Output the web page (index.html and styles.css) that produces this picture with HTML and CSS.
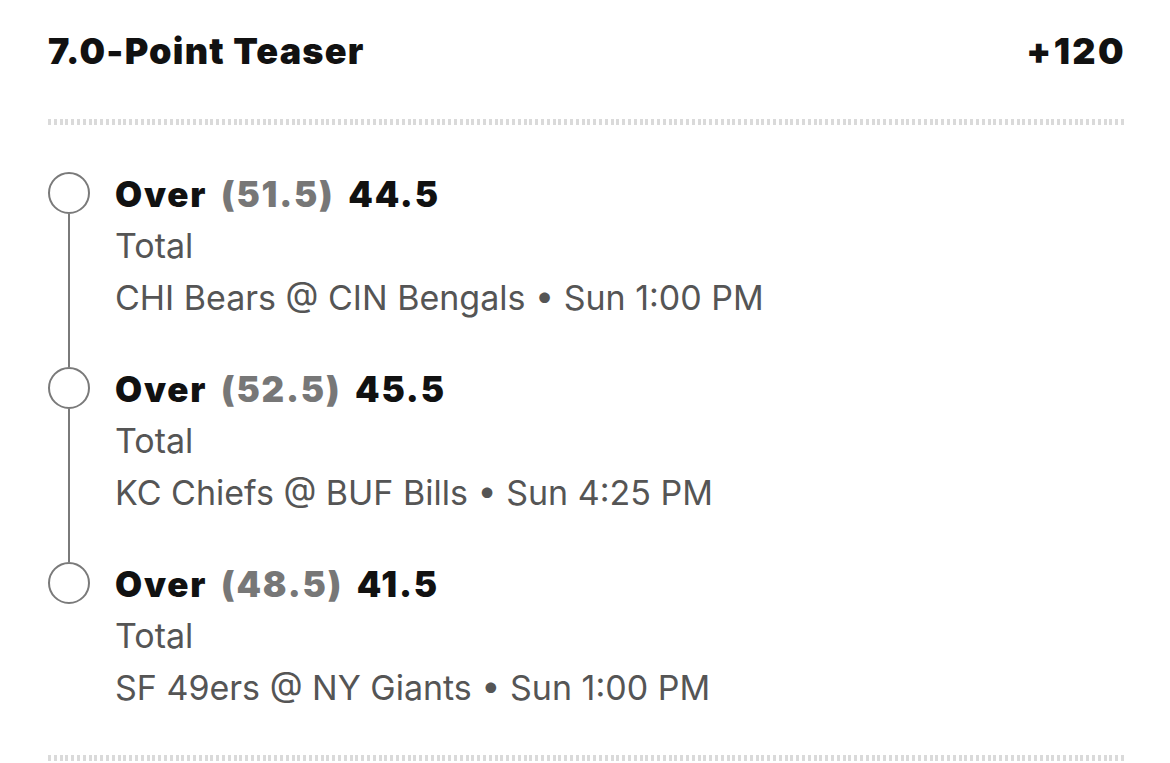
FILE: index.html
```html
<!DOCTYPE html>
<html>
<head>
<meta charset="utf-8">
<link rel="stylesheet" href="styles.css">
</head>
<body>
<div class="card">
  <div class="header">
    <div class="title">7.0-Point Teaser</div>
    <div class="odds">+120</div>
  </div>
  <div class="divider"></div>
  <div class="legs">
    <div class="leg">
      <div class="marker"><div class="dot"></div><div class="line"></div></div>
      <div class="info">
        <div class="pick">Over <span class="orig">(51.5)</span> 44.5</div>
        <div class="market">Total</div>
        <div class="game">CHI Bears @ CIN Bengals • Sun 1:00 PM</div>
      </div>
    </div>
    <div class="leg">
      <div class="marker"><div class="dot"></div><div class="line"></div></div>
      <div class="info">
        <div class="pick">Over <span class="orig">(52.5)</span> 45.5</div>
        <div class="market">Total</div>
        <div class="game">KC Chiefs @ BUF Bills • Sun 4:25 PM</div>
      </div>
    </div>
    <div class="leg last">
      <div class="marker"><div class="dot"></div></div>
      <div class="info">
        <div class="pick">Over <span class="orig">(48.5)</span> 41.5</div>
        <div class="market">Total</div>
        <div class="game">SF 49ers @ NY Giants • Sun 1:00 PM</div>
      </div>
    </div>
  </div>
  <div class="divider"></div>
</div>
</body>
</html>
```

FILE: styles.css
```css
html, body {
  margin: 0;
  padding: 0;
  background: #ffffff;
}
body {
  font-family: Inter, "Noto Sans", "Liberation Sans", sans-serif;
  color: #111;
}
.card {
  width: 1076px;
  padding: 0 0 0 48px;
}
.header {
  display: flex;
  justify-content: space-between;
  align-items: baseline;
  padding-top: 28px;
  height: 119px;
  box-sizing: border-box;
}
.title, .odds {
  font-size: 36px;
  font-weight: 900;
  line-height: 46px;
  color: #111;
}
.title {
  letter-spacing: 1.2px;
}
.odds {
  letter-spacing: 2.4px;
  margin-right: -2px;
}
.divider {
  height: 6px;
  background: repeating-linear-gradient(to right, #dadada 0 3px, transparent 3px 5.8px);
}
.legs {
  padding-top: 47px;
}
.leg {
  display: flex;
  height: 195px;
  gap: 25px;
}
.leg.last {
  height: 193px;
}
.marker {
  width: 42px;
  display: flex;
  flex-direction: column;
  align-items: center;
}
.dot {
  width: 42px;
  height: 42px;
  box-sizing: border-box;
  border: 2.5px solid #7a7a7a;
  border-radius: 50%;
  flex: none;
}
.line {
  width: 2.5px;
  flex: 1;
  background: #7a7a7a;
}
.info {
  display: flex;
  flex-direction: column;
}
.pick {
  font-size: 35px;
  font-weight: 900;
  line-height: 45px;
  color: #111;
  letter-spacing: 1.8px;
  word-spacing: 5px;
}
.orig {
  color: #777;
}
.market, .game {
  font-size: 34px;
  line-height: 52px;
  color: #555;
}
.market {
  margin-top: 3px;
}
```
